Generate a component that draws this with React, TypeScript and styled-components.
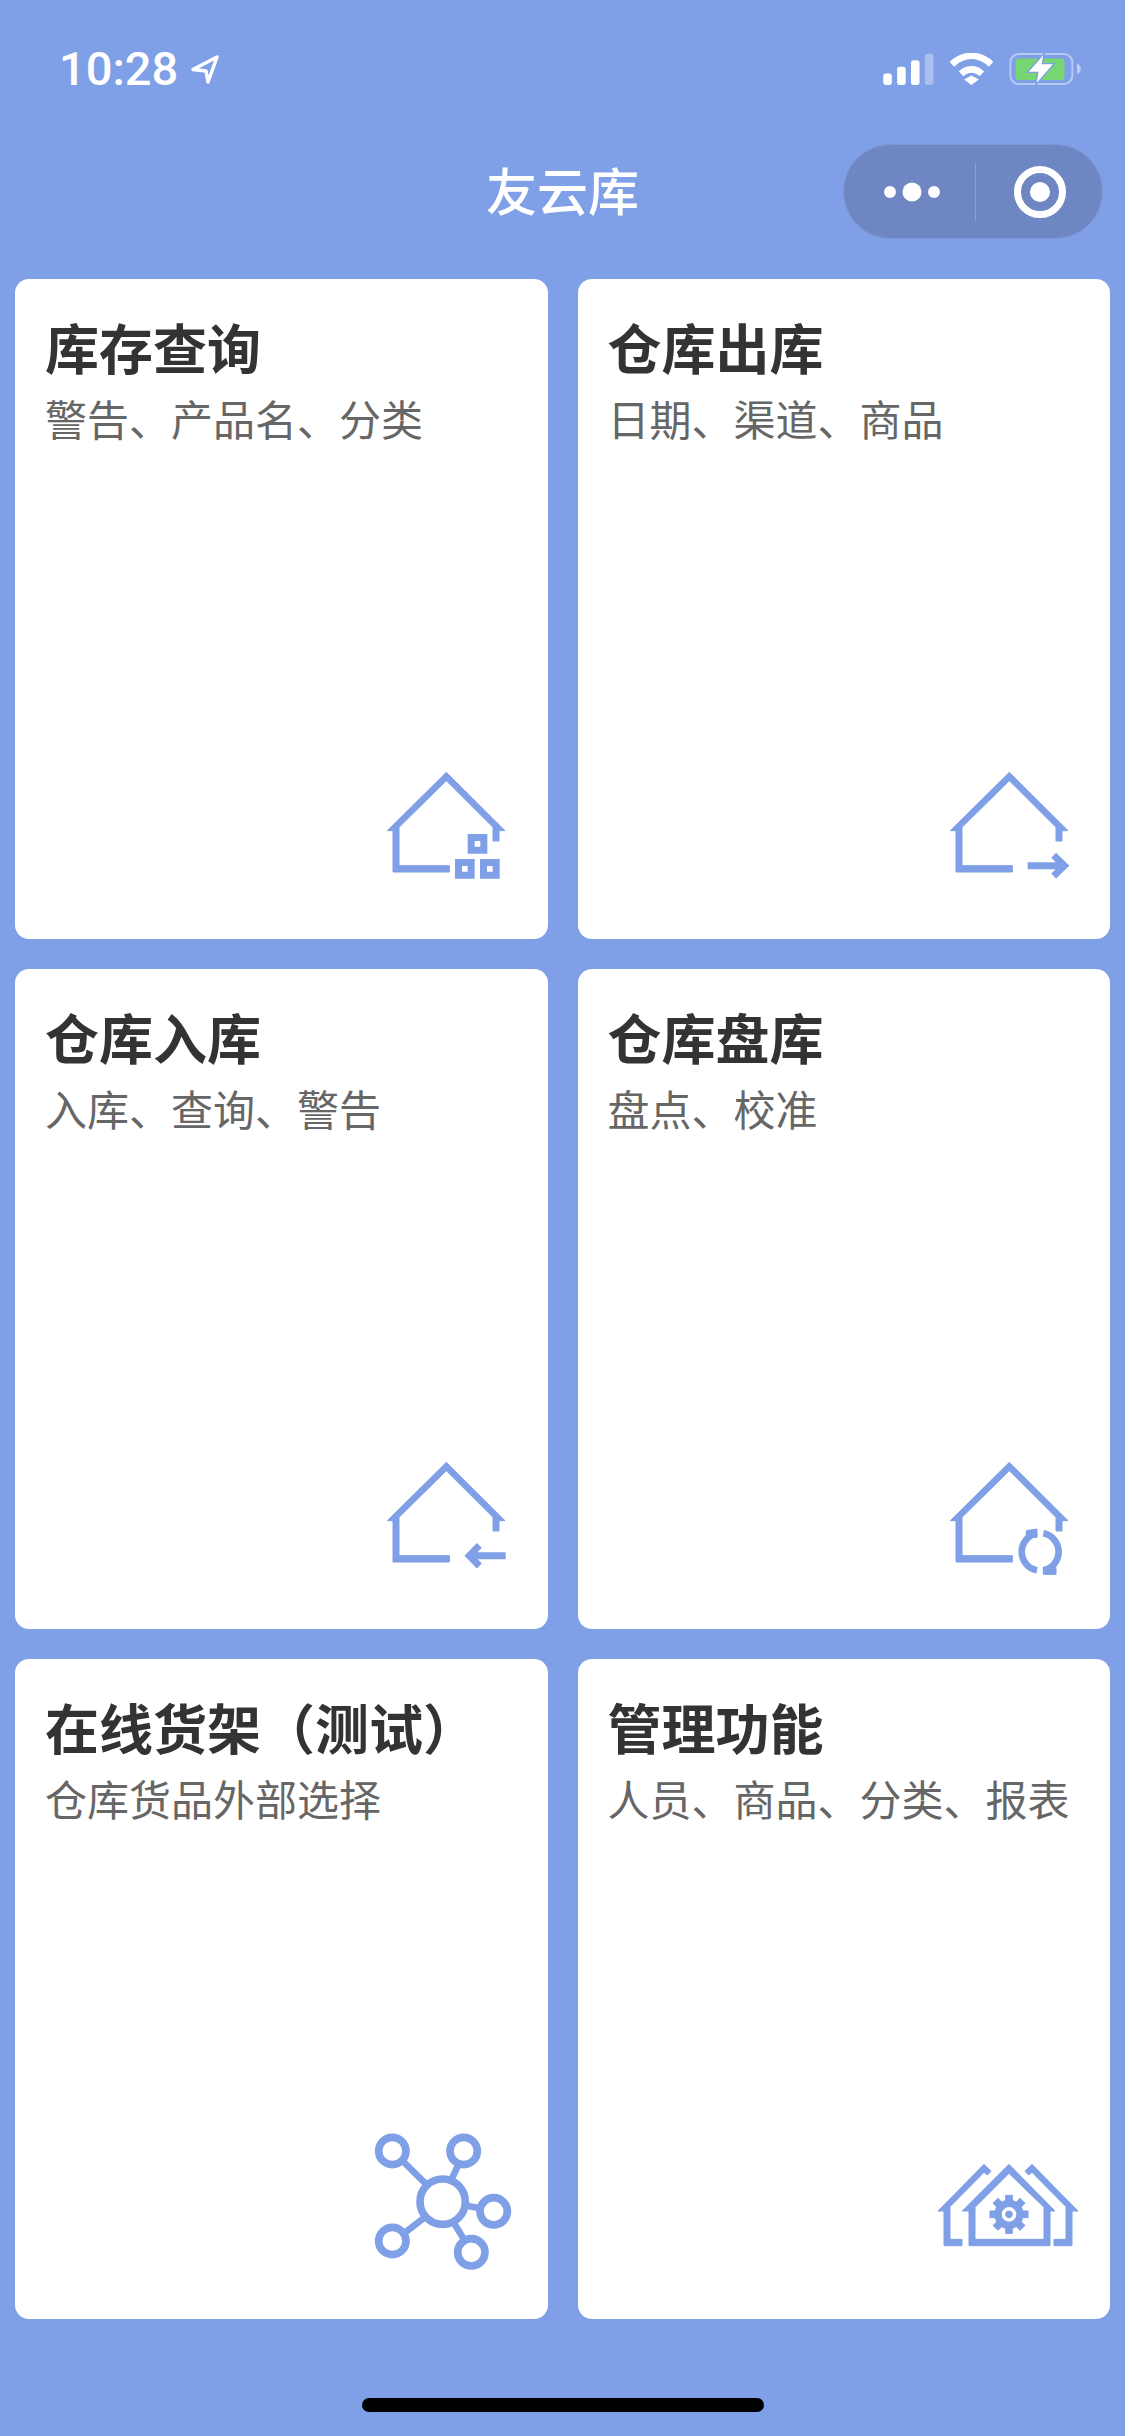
import React from 'react';
import styled, { createGlobalStyle } from 'styled-components';

const BRAND = '#7f9fe6';

const GlobalStyle = createGlobalStyle`
  html, body {
    margin: 0;
    padding: 0;
    background: ${BRAND};
  }
  * {
    box-sizing: border-box;
  }
`;

const HouseBody = () => (
  <polygon points="82,272 259,97 435,272 417,272 417,303 399,303 399,262 259,122 117,262 117,377 268,377 268,396 99,396 99,272" />
);

const StockIcon = () => (
  <>
    <HouseBody />
    <path
      fill="none"
      stroke={BRAND}
      strokeWidth="21"
      d="M333.500 292.500h38v38h-38zM295.500 367.500h38v38h-38zM370.500 367.500h38v38h-38z"
    />
  </>
);

const OutIcon = () => (
  <>
    <HouseBody />
    <path
      fill="none"
      stroke={BRAND}
      strokeWidth="21"
      d="M314 377H422M392 346L424 377L392 408"
    />
  </>
);

const InIcon = () => (
  <>
    <HouseBody />
    <path
      fill="none"
      stroke={BRAND}
      strokeWidth="21"
      d="M437 377H330M358 346L328 377L358 408"
    />
  </>
);

const CheckIcon = () => (
  <>
    <HouseBody />
    <path
      fill="none"
      stroke={BRAND}
      strokeWidth="20"
      d="M342 310A56.500 56.500 0 0 0 342 421M361 310A56.500 56.500 0 0 1 361 421"
    />
    <polygon points="310,302 342,297 342,322 310,322" />
    <polygon points="361,413 399,413 399,433 361,433" />
  </>
);

const ShelfIcon = () => (
  <g transform="translate(-30 -30)" fill="none" stroke={BRAND} strokeWidth="23">
    <circle cx="278" cy="275" r="68" />
    <circle cx="127" cy="123" r="41" />
    <circle cx="341" cy="123" r="41" />
    <circle cx="431" cy="304" r="41" />
    <circle cx="127" cy="393" r="41" />
    <circle cx="364" cy="427" r="41" />
    <path
      strokeWidth="20"
      d="M158 153L226 220M325 165L306 205M350 287L390 295M165 368L220 325M312 340L340 385"
    />
  </g>
);

const ManageIcon = () => (
  <g transform="translate(-7 30)">
    <path
      fillRule="evenodd"
      d="M125 243L265 103L403 243H388V347H145V243ZM265 130L163 232V328H370V232Z"
    />
    <polygon points="52,243 190,103 211,124 200,135 190,127 88,230 88,328 124,328 124,347 70,347 70,243" />
    <polygon points="472,243 334,103 313,124 324,135 334,127 436,230 436,328 400,328 400,347 454,347 454,243" />
    <circle cx="265" cy="253" r="33" fill="none" stroke={BRAND} strokeWidth="22" />
    <circle cx="265" cy="253" r="10" />
    {[0, 45, 90, 135, 180, 225, 270, 315].map((deg) => (
      <rect
        key={deg}
        x="255"
        y="196"
        width="20"
        height="18"
        transform={`rotate(${deg} 265 253)`}
      />
    ))}
  </g>
);

const ITEMS = [
  { title: '库存查询', desc: '警告、产品名、分类', Icon: StockIcon },
  { title: '仓库出库', desc: '日期、渠道、商品', Icon: OutIcon },
  { title: '仓库入库', desc: '入库、查询、警告', Icon: InIcon },
  { title: '仓库盘库', desc: '盘点、校准', Icon: CheckIcon },
  { title: '在线货架（测试）', desc: '仓库货品外部选择', Icon: ShelfIcon },
  { title: '管理功能', desc: '人员、商品、分类、报表', Icon: ManageIcon },
];

export default function App() {
  return (
    <Page>
      <GlobalStyle />
      <StatusBar>
        <Clock>
          <span>10:28</span>
          <svg width="30" height="30" viewBox="0 0 30 30">
            <path
              d="M27 3L3 15.500L16 17L18 28Z"
              fill="none"
              stroke="#fff"
              strokeWidth="3.500"
              strokeLinejoin="round"
            />
          </svg>
        </Clock>
        <StatusIcons>
          <svg width="51" height="32" viewBox="0 0 153 97">
            <g fill="#fff">
              <rect x="0" y="62" width="26" height="35" rx="8" />
              <rect x="42" y="42" width="26" height="55" rx="8" />
              <rect x="84" y="22" width="26" height="75" rx="8" />
              <rect x="126" y="2" width="26" height="95" rx="8" opacity="0.35" />
            </g>
          </svg>
          <svg width="45" height="32" viewBox="0 0 135 97">
            <path
              d="M8 34C45 0 90 0 127 34M36 63C55 45 80 45 99 63"
              fill="none"
              stroke="#fff"
              strokeWidth="20"
            />
            <polygon points="45,80 67,68 90,80 67,97" fill="#fff" />
          </svg>
          <svg width="73" height="32" viewBox="0 0 219 97">
            <rect x="3" y="3" width="188" height="91" rx="26" fill="none" stroke="#fff" strokeWidth="6" opacity="0.45" />
            <path d="M205 32C213 36 217 42 217 48C217 54 213 60 205 64Z" fill="#fff" opacity="0.5" />
            <rect x="19" y="17" width="148" height="65" rx="10" fill="#76d672" />
            <polygon
              points="106,0 54,59 86,59 80,97 136,32 100,32"
              fill="#fff"
              stroke={BRAND}
              strokeWidth="4"
            />
          </svg>
        </StatusIcons>
      </StatusBar>

      <NavBar>
        <NavTitle>友云库</NavTitle>
        <Capsule>
          <CapsuleCell $inset={6}>
            <svg width="56" height="20" viewBox="0 0 56 20" fill="#fff">
              <ellipse cx="6" cy="10" rx="6" ry="6" />
              <ellipse cx="28" cy="10" rx="9.500" ry="9.500" />
              <ellipse cx="50" cy="10" rx="6" ry="6" />
            </svg>
          </CapsuleCell>
          <CapsuleDivider />
          <CapsuleCell $inset={2}>
            <svg width="52" height="52" viewBox="0 0 52 52">
              <circle cx="26" cy="26" r="22.500" fill="none" stroke="#fff" strokeWidth="7" />
              <circle cx="26" cy="26" r="10" fill="#fff" />
            </svg>
          </CapsuleCell>
        </Capsule>
      </NavBar>

      <CardGrid>
        {ITEMS.map(({ title, desc, Icon }) => (
          <Card key={title}>
            <div>
              <CardTitle>{title}</CardTitle>
              <CardDesc>{desc}</CardDesc>
            </div>
            <CardIcon viewBox="0 0 540 480">
              <Icon />
            </CardIcon>
          </Card>
        ))}
      </CardGrid>

      <HomeBar />
    </Page>
  );
}

const Page = styled.div`
  width: 1125px;
  height: 2436px;
  overflow: hidden;
  display: flex;
  flex-direction: column;
  background: ${BRAND};
`;

const StatusBar = styled.div`
  height: 144px;
  padding: 52px 43px 0 59px;
  display: flex;
  justify-content: space-between;
  align-items: flex-start;
`;

const Clock = styled.div`
  display: flex;
  align-items: center;
  gap: 12px;
  height: 34px;
  color: #fff;
  font-family: Roboto, 'Liberation Sans', sans-serif;
  font-size: 47px;
  font-weight: 500;
  line-height: 34px;
`;

const StatusIcons = styled.div`
  display: flex;
  align-items: flex-start;
  gap: 15px;
  padding-top: 1px;
`;

const NavBar = styled.div`
  height: 135px;
  padding: 0 22px;
  display: grid;
  grid-template-columns: 1fr auto 1fr;
  align-items: start;
`;

const NavTitle = styled.div`
  grid-column: 2;
  color: #fff;
  font-family: 'Noto Sans CJK SC', sans-serif;
  font-size: 51px;
  font-weight: 500;
  line-height: 60px;
  margin-top: 15px;
`;

const Capsule = styled.div`
  grid-column: 3;
  justify-self: end;
  width: 260px;
  height: 95px;
  border-radius: 48px;
  background: #6e87c2;
  border: 1px solid #7d97d6;
  display: flex;
  align-items: center;
`;

const CapsuleCell = styled.div<{ $inset: number }>`
  flex: 1;
  padding-left: ${({ $inset }) => $inset}px;
  display: flex;
  justify-content: center;
  align-items: center;
`;

const CapsuleDivider = styled.div`
  width: 1px;
  height: 56px;
  background: #8ba1d3;
`;

const CardGrid = styled.div`
  padding: 0 15px;
  display: grid;
  grid-template-columns: 1fr 1fr;
  grid-auto-rows: 660px;
  gap: 30px;
`;

const Card = styled.div`
  background: #fff;
  border-radius: 14px;
  padding: 41px 0 39px 30px;
  display: flex;
  flex-direction: column;
  justify-content: space-between;
`;

const CardTitle = styled.div`
  color: #333;
  font-family: 'Noto Sans CJK SC', sans-serif;
  font-size: 54px;
  font-weight: 700;
  line-height: 54px;
`;

const CardDesc = styled.div`
  margin-top: 23px;
  color: #666;
  font-family: 'Noto Sans CJK SC', sans-serif;
  font-size: 42px;
  font-weight: 400;
  line-height: 42px;
`;

const CardIcon = styled.svg`
  align-self: flex-end;
  width: 180px;
  height: 160px;
  margin-right: 7.500px;
  fill: ${BRAND};
  stroke: ${BRAND};
  stroke-width: 3;
`;

const HomeBar = styled.div`
  align-self: center;
  width: 402px;
  height: 14px;
  margin-top: 79px;
  border-radius: 7px;
  background: #000;
`;
